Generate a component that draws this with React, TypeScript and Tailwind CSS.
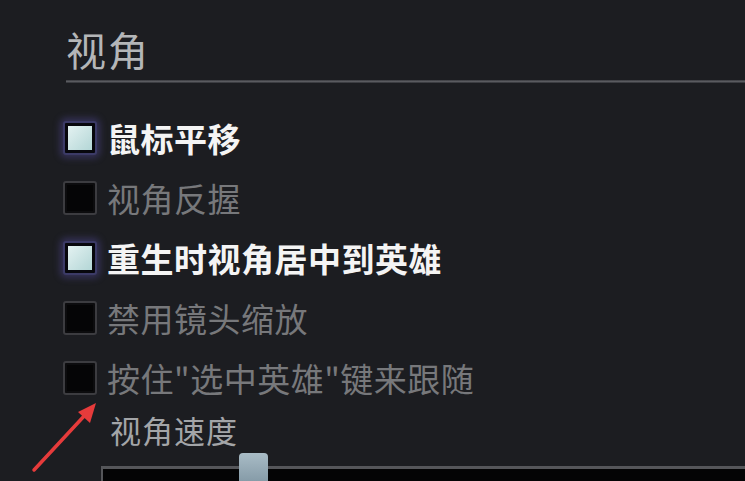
import React from 'react';

const options = [
  { label: '鼠标平移', checked: true },
  { label: '视角反握', checked: false },
  { label: '重生时视角居中到英雄', checked: true },
  { label: '禁用镜头缩放', checked: false },
  { label: '按住"选中英雄"键来跟随', checked: false },
];

const CheckBox = ({ checked }: { checked: boolean }) => {
  if (checked) {
    return (
      <div className="w-[34px] h-[34px] flex items-center justify-center rounded-[3px] bg-[#07070d] border-2 border-[#3b3a66] shadow-[0_0_7px_3px_rgba(90,80,170,0.4)] shrink-0">
        <div className="w-[24px] h-[24px] bg-gradient-to-br from-[#e4f2f2] to-[#b3d6d6]" />
      </div>
    );
  }
  return (
    <div className="w-[34px] h-[34px] rounded-[3px] bg-[#050506] border-2 border-[#3c3c40] shadow-[inset_0_0_0_2px_#0c0c0e] shrink-0" />
  );
};

export default function App() {
  return (
    <div
      className="relative w-[745px] h-[481px] overflow-hidden bg-[#1c1d21]"
      style={{ fontFamily: '"Noto Sans CJK SC", "Noto Sans", sans-serif' }}
    >
      <div className="pl-[66px] pt-[23px]">
        <div className="text-[40px] leading-[52px] text-[#b4b6b8] tracking-[2px]">视角</div>
        <div className="mt-[5px] h-[3px] bg-gradient-to-b from-[#3a3b40] via-[#5a5b60] to-[#2e2f34]" />
      </div>

      <div className="pl-[63px] mt-[38px] flex flex-col gap-[26px]">
        {options.map((o, i) => (
          <div key={i} className="flex items-center gap-[10px] h-[34px]">
            <CheckBox checked={o.checked} />
            <span
              className={`text-[33px] leading-[34px] whitespace-nowrap tracking-[0.5px] ${
                o.checked ? 'text-[#f4f4f4] font-bold' : 'text-[#77787b]'
              }`}
            >
              {o.label}
            </span>
          </div>
        ))}
      </div>

      <div className="pl-[110px] mt-[15px] text-[31px] leading-[40px] text-[#a3a5a8] tracking-[1px]">
        视角速度
      </div>

      <div className="relative ml-[101px] mt-[3px] h-[30px]">
        <div className="absolute left-0 right-0 top-[13px] bottom-0 bg-[#040405] border-t-[3px] border-l-2 border-[#55565a]" />
        <div className="absolute left-[138px] top-0 w-[29px] h-[34px] rounded-[4px] bg-gradient-to-b from-[#a9bcc6] to-[#7f95a2]" />
      </div>

      <svg className="absolute left-0 top-0" width="745" height="481" viewBox="0 0 745 481">
        <line x1="34" y1="470" x2="86" y2="414" stroke="#e63b3b" strokeWidth="3.5" strokeLinecap="round" />
        <polygon points="96,403 78,412 90,423" fill="#e63b3b" />
      </svg>
    </div>
  );
}
